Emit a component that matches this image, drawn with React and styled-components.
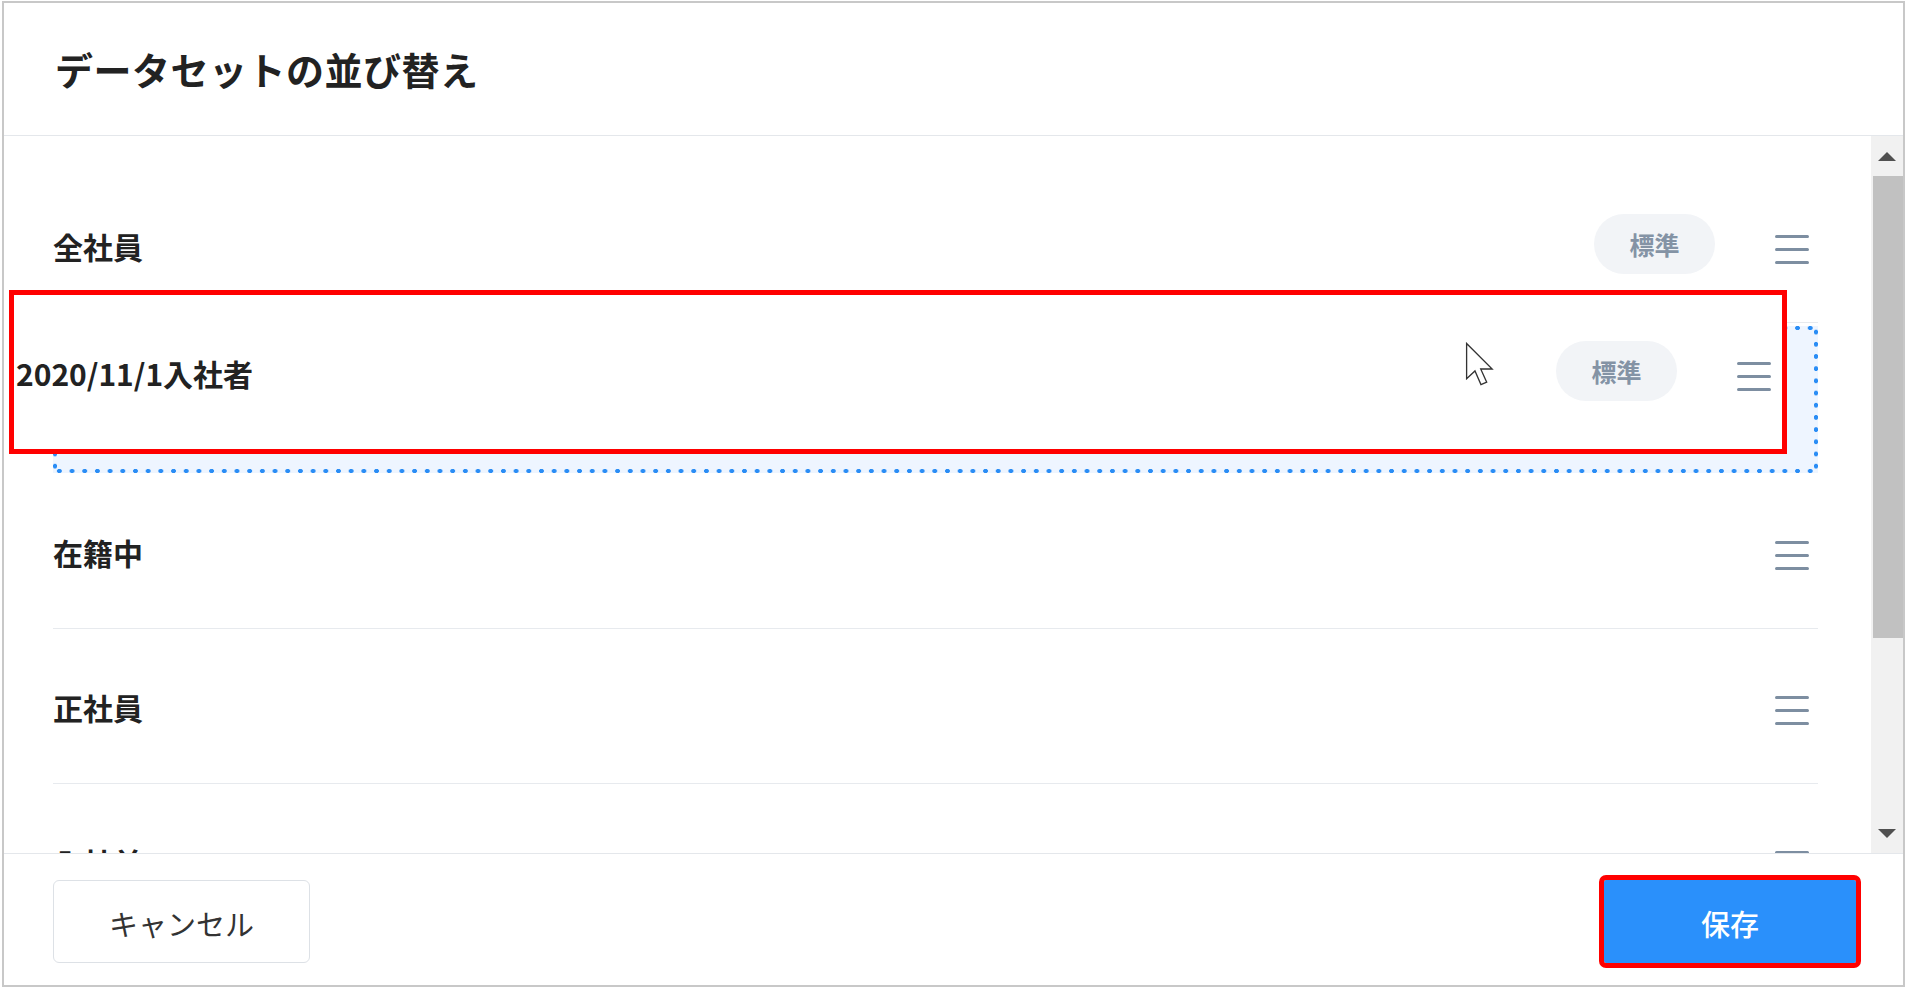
import React from 'react'
import styled, { createGlobalStyle } from 'styled-components'

const GlobalStyle = createGlobalStyle`
  html, body {
    margin: 0;
    padding: 0;
    background: #fff;
  }
  body {
    font-family: "Noto Sans CJK JP", "Noto Sans", "Liberation Sans", sans-serif;
    color: #222;
  }
  * {
    box-sizing: border-box;
  }
`

const rows = [
  { name: '全社員', badge: true },
  { placeholder: true },
  { name: '在籍中' },
  { name: '正社員' },
  { name: '入社前' },
]

function Handle() {
  return (
    <HandleIcon width="34" height="29" viewBox="0 0 34 29">
      <line x1="1.5" y1="1.5" x2="32.5" y2="1.5" />
      <line x1="1.5" y1="14.5" x2="32.5" y2="14.5" />
      <line x1="1.5" y1="27.5" x2="32.5" y2="27.5" />
    </HandleIcon>
  )
}

function RowContent({ name, badge }) {
  return (
    <>
      <Name>{name}</Name>
      {badge && <Badge>標準</Badge>}
      <Handle />
    </>
  )
}

function App() {
  return (
    <>
      <GlobalStyle />
      <Screen>
        <Modal>
          <Header>
            <Title>データセットの並び替え</Title>
          </Header>
          <Body>
            <List>
              {rows.map((r, i) =>
                r.placeholder ? (
                  <Placeholder key={i} />
                ) : (
                  <Row key={i}>
                    <RowContent name={r.name} badge={r.badge} />
                  </Row>
                )
              )}
            </List>
            <Scrollbar>
              <ArrowButton>
                <Triangle $dir="up" />
              </ArrowButton>
              <Thumb />
              <Track />
              <ArrowButton>
                <Triangle $dir="down" />
              </ArrowButton>
            </Scrollbar>
          </Body>
          <Footer>
            <CancelButton>キャンセル</CancelButton>
            <SaveButton>保存</SaveButton>
          </Footer>
        </Modal>

        {/* 掴んでドラッグ中の行 */}
        <Row $floating>
          <RowContent name="2020/11/1入社者" badge />
        </Row>

        <Cursor width="30" height="44" viewBox="0 0 12.4 18.4">
          <path d="M0.6 0.6 L0.6 15.4 L4.1 12.1 L6.6 17.8 L9 16.8 L6.5 11.3 L11.3 11.3 Z" />
        </Cursor>
      </Screen>
    </>
  )
}

export default App

const Screen = styled.div`
  position: relative;
  width: 1907px;
  height: 990px;
  padding: 1px 0 0 2px;
  overflow: hidden;
`

const Modal = styled.div`
  width: 1903px;
  height: 986px;
  border: 2px solid #c8c8c8;
  display: flex;
  flex-direction: column;
  background: #fff;
`

const Header = styled.header`
  flex: none;
  height: 133px;
  display: flex;
  align-items: center;
  padding: 0 0 2px 51px;
  border-bottom: 1px solid #e4e7eb;
`

const Title = styled.h1`
  margin: 0;
  font-size: 38px;
  font-weight: 700;
  color: #222;
  letter-spacing: 0.5px;
`

const Body = styled.div`
  flex: none;
  height: 717px;
  display: flex;
`

const List = styled.div`
  flex: 1;
  padding: 32px 53px 0 49px;
  overflow: hidden;
`

const Row = styled.div`
  display: flex;
  align-items: center;
  height: 155px;
  padding: 4px 9px 0 0;
  border-bottom: 1px solid #e7eaee;
  background: #fff;

  ${p => p.$floating && `
    position: absolute;
    left: 14px;
    top: 295px;
    width: 1768px;
    height: 154px;
    padding: 4px 11px 0 2px;
    border-bottom: none;
    outline: 5px solid #ff0000;
  `}
`

const Name = styled.div`
  flex: 1;
  margin-top: -3px;
  font-size: 30px;
  font-weight: 700;
  color: #222;
  white-space: nowrap;
`

const Badge = styled.span`
  display: flex;
  align-items: center;
  justify-content: center;
  width: 121px;
  height: 60px;
  margin: -6px 60px 0 0;
  border-radius: 30px;
  background: #f2f4f7;
  color: #8493a5;
  font-size: 25px;
  font-weight: 700;
`

const HandleIcon = styled.svg`
  flex: none;
  margin-top: 4px;
  stroke: #7d8ea1;
  stroke-width: 3;
  stroke-linecap: round;
`

const Placeholder = styled.div`
  height: 147px;
  margin: 3px 0 1px;
  background:
    radial-gradient(circle, #2a8df5 2px, transparent 2.6px) 0 0 / 12.7px 4px repeat-x,
    radial-gradient(circle, #2a8df5 2px, transparent 2.6px) 0 100% / 12.7px 4px repeat-x,
    radial-gradient(circle, #2a8df5 2px, transparent 2.6px) 0 0 / 4px 12.2px repeat-y,
    radial-gradient(circle, #2a8df5 2px, transparent 2.6px) 100% 0 / 4px 12.2px repeat-y,
    #eef5ff;
`

const Scrollbar = styled.div`
  flex: none;
  width: 32px;
  display: flex;
  flex-direction: column;
  background: #f1f1f1;
`

const ArrowButton = styled.div`
  flex: none;
  height: 40px;
  display: flex;
  align-items: center;
  justify-content: center;
`

const Triangle = styled.span`
  width: 0;
  height: 0;
  border-left: 9px solid transparent;
  border-right: 9px solid transparent;
  ${p => p.$dir === 'up'
    ? 'border-bottom: 9px solid #505050; margin-top: 0;'
    : 'border-top: 9px solid #505050; margin-top: 0;'}
`

const Thumb = styled.div`
  flex: none;
  height: 462px;
  margin-left: 2px;
  background: #c1c1c1;
`

const Track = styled.div`
  flex: 1;
`

const Footer = styled.footer`
  flex: 1;
  display: flex;
  justify-content: space-between;
  align-items: flex-start;
  padding: 26px 47px 0 49px;
  border-top: 1px solid #e4e7eb;
`

const CancelButton = styled.button`
  width: 257px;
  height: 83px;
  border: 1px solid #dde1e6;
  border-radius: 6px;
  background: #fff;
  color: #333;
  font-family: inherit;
  font-size: 29px;
  font-weight: 400;
  padding: 2px 0 0;
`

const SaveButton = styled.button`
  width: 252px;
  height: 83px;
  border: none;
  border-radius: 2px;
  background: #2a90fb;
  color: #fff;
  font-family: inherit;
  font-size: 29px;
  font-weight: 500;
  padding: 2px 0 0;
  outline: 5px solid #ff0000;
  outline-offset: 0;
`

const Cursor = styled.svg`
  position: absolute;
  left: 1465px;
  top: 342px;
  fill: #fff;
  stroke: #333;
  stroke-width: 0.55;
  stroke-linejoin: miter;
`
